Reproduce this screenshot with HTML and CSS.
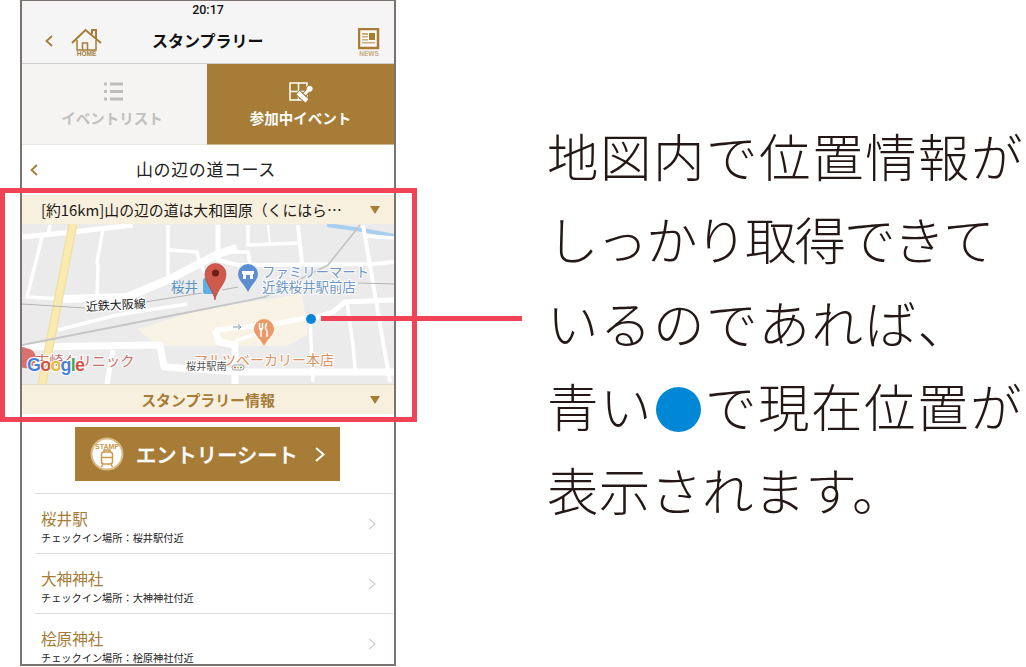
FILE: index.html
```html
<!DOCTYPE html>
<html lang="ja">
<head>
<meta charset="utf-8">
<title>スタンプラリー</title>
<link rel="stylesheet" href="styles.css">
</head>
<body>
<div class="stage">
  <div class="phone">
    <header class="top">
      <div class="status">20:17</div>
      <div class="nav">
        <svg class="chev-nav" viewBox="0 0 8 12"><path d="M7 1 L1.5 6 L7 11"/></svg>
        <svg class="home" viewBox="0 0 32 28">
          <path class="ln2" d="M1 15 L14.500 2 L30 15"/>
          <path class="ln2" d="M21 6 V2 H25 V11"/>
          <path class="ln15" d="M6 12 V22 H25 V12 M11.500 22 V15 H16.500 V22"/>
          <text class="tiny" x="15.500" y="27.500" text-anchor="middle">HOME</text>
        </svg>
        <div class="nav-title">スタンプラリー</div>
        <svg class="news" viewBox="0 0 22 28">
          <rect class="paper" x="1" y="1" width="19" height="19"/>
          <rect class="fillg" x="11" y="5" width="6" height="7"/>
          <rect class="fillp" x="4" y="5" width="6" height="2"/>
          <rect class="fillp" x="4" y="8" width="6" height="1.500"/>
          <rect class="fillp" x="4" y="11" width="6" height="1.500"/>
          <rect class="fillp" x="4" y="14" width="13" height="1.500"/>
          <text class="tiny pale" x="11" y="27.500" text-anchor="middle">NEWS</text>
        </svg>
      </div>
    </header>

    <div class="tabs">
      <div class="tab off">
        <svg class="tab-ico" viewBox="0 0 25 22">
          <path class="list" d="M3 2 H6 M9 2 H22 M3 9.500 H6 M9 9.500 H22 M3 17 H6 M9 17 H22"/>
        </svg>
        <span>イベントリスト</span>
      </div>
      <div class="tab on">
        <svg class="tab-ico" viewBox="0 0 25 22">
          <path class="wline" d="M1 1 H18 V18 H1 Z M9.500 1 V18 M1 9.500 H18"/>
          <g transform="rotate(42 16 12)">
            <rect class="stampbody" x="9.500" y="13" width="13" height="5.500"/>
            <path class="stampbody" d="M14 13 V8 C11.500 6 12.500 1.500 16 1.500 C19.500 1.500 20.500 6 18 8 V13 Z"/>
          </g>
        </svg>
        <span>参加中イベント</span>
      </div>
    </div>

    <div class="course">
      <svg class="chev-course" viewBox="0 0 8 12"><path d="M7 1 L1.500 6 L7 11"/></svg>
      <span>山の辺の道コース</span>
    </div>

    <div class="acc acc-first">
      <span class="acc-text">[約16km]山の辺の道は大和国原（くにはら…</span>
      <i class="tri"></i>
    </div>

    <div class="map">
      <svg class="map-svg" viewBox="0 0 372 160">
        <rect class="ground" width="372" height="160"/>
        <path class="beige" d="M116 105 L180 85 L280 70 L286 110 L265 122 L135 122 Z"/>
        <path class="river" d="M305 1 L340 6 L373 12"/>
        <g class="roads">
          <path class="r5" d="M0 13 L51 8 L111 1"/>
          <path class="r3" d="M28 1 L26 11"/>
          <path class="r3" d="M20 13 L5 73 L41 75"/>
          <path class="r3" d="M81 5 L75 38 L76 42 L75 73"/>
          <path class="r8" d="M41 75 L105 73 L148 55 L196 30 L215 24"/>
          <path class="r3" d="M146 1 V55"/>
          <path class="r3" d="M148 26 L175 28 L178 41 L183 48"/>
          <path class="r3" d="M36 106 L95 91 L165 80"/>
          <path class="r7" d="M0 123 L138 121 L142 143 L188 146 L220 148 L372 148"/>
          <path class="r5" d="M91 126 L85 160"/>
          <path class="r5" d="M196 1 V38"/>
          <path class="r3" d="M226 1 V21 L277 19"/>
          <path class="r2" d="M246 1 L248 21"/>
          <path class="r4" d="M276 1 L280 40"/>
          <path class="r3" d="M201 28 L226 28 L228 41"/>
          <path class="r4" d="M196 36 L216 41 L350 40 L372 38"/>
          <path class="r4" d="M341 1 L368 158"/>
          <path class="r3" d="M345 12 L373 14"/>
          <path class="r5" d="M290 95 L311 88 L323 78 L373 76"/>
          <path class="r5" d="M193 106 L251 100 L290 93"/>
          <path class="r3" d="M288 95 L291 158"/>
          <path class="r3" d="M325 78 L331 121 L333 146"/>
          <path class="r6" d="M193 106 L197 118 L213 121 V160"/>
          <path class="r3" d="M213 117 L240 108"/>
        </g>
        <path class="yellow-edge" d="M51 0 L20 160"/>
        <path class="yellow" d="M51 0 L20 160"/>
        <path class="rail-thin" d="M0 80 L63 84 M123 78 L180 69 M200 66 L216 63 M336 59 L372 60"/>
        <path class="rail" d="M0 121 L183 85 L243 73 L306 41 L338 1"/>
        <path class="arrow" d="M211 103 H219 M216 100.500 L219 103 L216 105.500"/>
        <text class="lbl-rail" x="64" y="87" transform="rotate(-3 64 87)">近鉄大阪線</text>
        <text class="lbl-blue" x="149" y="68">桜井</text>
        <rect class="st-ico" x="181" y="54" width="14" height="16" rx="2"/>
        <text class="lbl-fm" x="240" y="53">ファミリーマート</text>
        <text class="lbl-fm" x="240" y="68">近鉄桜井駅前店</text>
        <text class="lbl-shop" x="172" y="141">マルツベーカリー本店</text>
        <text class="lbl-clinic" x="13" y="142">志崎クリニック</text>
        <text class="lbl-st" x="164" y="146">桜井駅南</text>
        <rect class="bus" x="210" y="141" width="12" height="5" rx="2.500"/>
        <circle class="bus-r" cx="213" cy="143.500" r="1"/>
        <circle class="bus-y" cx="216" cy="143.500" r="1"/>
        <circle class="bus-g" cx="219" cy="143.500" r="1"/>
        <path class="pin-clinic" d="M-6 133 A10 10 0 1 1 -1 143 Z M0 123 A10 10 0 0 1 0 143 Z"/>
        <path class="pin-fm" d="M226 68 C222 60 216 56 216 50 A10 10 0 0 1 236 50 C236 56 230 60 226 68 Z"/>
        <path class="pin-fm-w" d="M220 47 H232 V50 H220 Z M221 50 V55 H231 V50 M224 51 H228 V55 H224 Z"/>
        <path class="pin-food" d="M242 122 C238 114 232 111 232 105 A10 10 0 0 1 252 105 C252 111 246 114 242 122 Z"/>
        <path class="pin-food-w" d="M237.500 99 V104 C237.500 106 240.500 106 240.500 104 V99 M239 104 V113 M245 99 C243 101 243 106 245 107 V113"/>
        <path class="pin-red" d="M193 76 C191 65 183 60 183 50 A10.500 10.500 0 0 1 204 50 C204 60 195 65 193 76 Z"/>
        <circle class="pin-dot" cx="193.500" cy="49" r="3.500"/>
        <text class="g-logo" x="5" y="147"><tspan class="g1">G</tspan><tspan class="g2">o</tspan><tspan class="g3">o</tspan><tspan class="g1">g</tspan><tspan class="g4">l</tspan><tspan class="g2">e</tspan></text>
        <circle class="me" cx="289" cy="95" r="5"/>
      </svg>
    </div>

    <div class="acc acc-second">
      <span class="acc-mid">スタンプラリー情報</span>
      <i class="tri"></i>
    </div>

    <div class="btn-wrap">
      <div class="entry">
        <svg class="entry-ico" viewBox="0 0 34 34">
          <circle class="badge" cx="17" cy="17" r="15.500"/>
          <text class="badge-t" x="17" y="12" text-anchor="middle">STAMP</text>
          <rect class="train" x="11.500" y="15" width="11" height="12" rx="2.500"/>
          <path class="train" d="M11.500 20.500 H22.500 M14 15 V13 H20 V15 M13 27 L11.500 30 M21 27 L22.500 30"/>
        </svg>
        <span class="entry-t">エントリーシート</span>
        <svg class="entry-chev" viewBox="0 0 10 15"><path d="M1 1 L8.500 7.500 L1 14"/></svg>
      </div>
    </div>

    <ul class="spots">
      <li class="spot">
        <div><div class="spot-name">桜井駅</div><div class="spot-sub">チェックイン場所：桜井駅付近</div></div>
        <svg class="spot-chev" viewBox="0 0 8 12"><path d="M1 1 L7 6 L1 11"/></svg>
      </li>
      <li class="spot">
        <div><div class="spot-name">大神神社</div><div class="spot-sub">チェックイン場所：大神神社付近</div></div>
        <svg class="spot-chev" viewBox="0 0 8 12"><path d="M1 1 L7 6 L1 11"/></svg>
      </li>
      <li class="spot">
        <div><div class="spot-name">桧原神社</div><div class="spot-sub">チェックイン場所：桧原神社付近</div></div>
        <svg class="spot-chev" viewBox="0 0 8 12"><path d="M1 1 L7 6 L1 11"/></svg>
      </li>
    </ul>
  </div>

  <div class="note">
    <div>地図内で位置情報が</div>
    <div class="note-tight">しっかり取得できて</div>
    <div>いるのであれば、</div>
    <div>青い<i class="note-dot"></i>で現在位置が</div>
    <div class="note-snug">表示されます。</div>
  </div>

  <div class="callout"></div>
  <div class="leader"></div>
</div>
</body>
</html>
```

FILE: styles.css
```css
* { box-sizing: border-box; }
html, body { margin: 0; padding: 0; background: #fff; overflow: hidden; }
body { font-family: "Noto Sans CJK JP", "Noto Sans", sans-serif; color: #231815; }

.stage { position: relative; width: 1026px; height: 667px; display: flex; align-items: flex-start; overflow: hidden; }

.phone { width: 376px; height: 666px; margin-left: 20px; flex: none; border: 2px solid #7a7370; border-top-width: 1px; overflow: hidden; background: #fff; }

.top { height: 63px; background: #f5f5f5; border-bottom: 1px solid #cfcfcf; }
.status { height: 17px; text-align: center; font: 500 12.500px/17px Roboto, "Liberation Sans", sans-serif; color: #111; }
.nav { position: relative; height: 45px; display: flex; align-items: center; padding-left: 23px; }
.chev-nav { width: 8px; height: 12px; flex: none; fill: none; stroke: #a67c37; stroke-width: 1.800; }
.home { width: 32px; height: 28px; flex: none; margin-left: 18px; margin-top: 2px; }
.ln2 { fill: none; stroke: #a67c37; stroke-width: 2; }
.ln15 { fill: none; stroke: #a67c37; stroke-width: 1.500; }
.tiny { font: 700 6.500px "Liberation Sans", sans-serif; fill: #a67c37; }
.pale { fill: #c9ad7b; }
.nav-title { flex: none; margin-left: 49px; font-size: 16px; font-weight: 700; color: #111; line-height: 20px; width: 110px; white-space: nowrap; margin-top: -1px; }
.news { width: 22px; height: 28px; flex: none; margin-left: 96px; margin-top: 2px; }
.paper { fill: #fbf9f5; stroke: #a67c37; stroke-width: 2.500; }
.fillg { fill: #a67c37; }
.fillp { fill: #c9ad7b; }

.tabs { display: flex; height: 81px; }
.tab { height: 81px; display: flex; flex-direction: column; align-items: center; font-size: 14.500px; font-weight: 700; line-height: 20px; padding-top: 18px; }
.tab span { margin-top: 4px; white-space: nowrap; }
.tab.off { width: 185px; padding-right: 5px; background: #f5f4f2; color: #c0c0c0; border-bottom: 1px solid #e9e7e2; }
.tab.on { width: 187px; background: #a67c37; color: #fff; border-bottom: 1px solid #d0b88e; }
.tab-ico { width: 25px; height: 22px; margin-left: 2px; }
.list { stroke: #bcbcbc; stroke-width: 3; fill: none; }
.wline { stroke: #fff; stroke-width: 1.500; fill: none; }
.stampbody { fill: #fff; stroke: #a67c37; stroke-width: 1; }

.course { position: relative; height: 50px; display: flex; align-items: center; justify-content: center; font-size: 17px; color: #222; padding-right: 4px; letter-spacing: .6px; }
.course span { margin-top: -3px; }
.chev-course { position: absolute; left: 8px; top: 19px; width: 8px; height: 12px; fill: none; stroke: #a67c37; stroke-width: 1.800; }

.acc { position: relative; background: #f8f0df; display: flex; align-items: center; }
.acc-first { height: 29px; padding-left: 19px; font-size: 14.850px; color: #231815; white-space: nowrap; }
.acc-second { height: 30px; justify-content: center; font-size: 14.900px; font-weight: 700; color: #a67c37; border-top: 1px solid #e2dccb; }
.tri { position: absolute; right: 14px; top: 11px; width: 0; height: 0; border-left: 5px solid transparent; border-right: 5px solid transparent; border-top: 8px solid #a67c37; }

.map { height: 160px; }
.map-svg { display: block; width: 372px; height: 160px; }
.ground { fill: #ebebeb; }
.beige { fill: #f8f3e4; }
.river { fill: none; stroke: #a9cff0; stroke-width: 4; }
.roads path { fill: none; stroke: #fff; stroke-linejoin: round; }
.roads .r2 { stroke-width: 2; }
.roads .r3 { stroke-width: 3.500; }
.roads .r4 { stroke-width: 4; }
.roads .r5 { stroke-width: 5; }
.roads .r6 { stroke-width: 7; }
.roads .r7 { stroke-width: 7; }
.roads .r8 { stroke-width: 8; }
.yellow-edge { fill: none; stroke: #efdf9f; stroke-width: 9; }
.yellow { fill: none; stroke: #f9eab0; stroke-width: 6.500; }
.rail-thin { fill: none; stroke: #b4b4b4; stroke-width: 1; }
.rail { fill: none; stroke: #c6c6c6; stroke-width: 1.800; }
.arrow { fill: none; stroke: #8d92b0; stroke-width: 1; }
.lbl-rail { font-size: 12px; fill: #222; stroke: #fff; stroke-width: 2.500px; paint-order: stroke; }
.lbl-blue { font-size: 13.500px; fill: #5a93c8; }
.st-ico { fill: #5eb1e8; }
.lbl-fm { font-size: 13.400px; fill: #6f95c4; stroke: #fff; stroke-width: 2px; paint-order: stroke; }
.lbl-shop { font-size: 14px; fill: #d9925f; stroke: #fff; stroke-width: 2px; paint-order: stroke; }
.lbl-clinic { font-size: 14.200px; fill: #c46a66; stroke: #fff; stroke-width: 2px; paint-order: stroke; }
.lbl-st { font-size: 10.200px; fill: #555; stroke: #fff; stroke-width: 2px; paint-order: stroke; }
.bus { fill: #fff; stroke: #888; stroke-width: .8; }
.bus-r { fill: #d9534f; }
.bus-y { fill: #e2b33c; }
.bus-g { fill: #5aa85a; }
.pin-clinic { fill: #d9726c; }
.pin-fm { fill: #5b8fd0; }
.pin-fm-w { fill: #fff; }
.pin-food { fill: #e89a68; }
.pin-food-w { fill: none; stroke: #fff; stroke-width: 1.500; }
.pin-red { fill: #cf5a4c; stroke: #a8402f; stroke-width: .6; }
.pin-dot { fill: #6b1f16; }
.g-logo { font: 700 18px "Liberation Sans", sans-serif; stroke: #fff; stroke-width: 2px; paint-order: stroke; letter-spacing: -.8px; }
.g1 { fill: #4a7fd9; }
.g2 { fill: #d8503f; }
.g3 { fill: #e8b730; }
.g4 { fill: #4aa45a; }
.me { fill: #0a85d9; }

.btn-wrap { display: flex; padding: 13px 0 12px 53px; }
.entry { width: 265px; height: 54px; background: #a67c37; display: flex; align-items: center; padding-left: 15px; color: #fff; }
.entry-ico { width: 34px; height: 34px; flex: none; }
.badge { fill: #fff; stroke: #d9bb84; stroke-width: 2; }
.badge-t { font: 700 7px "Liberation Sans", sans-serif; fill: #c99b4e; }
.train { fill: none; stroke: #c99b4e; stroke-width: 1.500; }
.entry-t { font-size: 20.300px; font-weight: 500; -webkit-text-stroke: .35px #fff; margin-left: 12px; white-space: nowrap; width: 162px; line-height: 24px; }
.entry-chev { width: 10px; height: 15px; margin-left: 17px; fill: none; stroke: #fff; stroke-width: 2; }

.spots { list-style: none; margin: 0 0 0 13px; padding: 0; }
.spot { height: 60px; border-top: 1px solid #dedede; padding: 12px 18px 0 6px; display: flex; justify-content: space-between; }
.spot-name { font-size: 15.600px; line-height: 24px; color: #a67c37; white-space: nowrap; }
.spot-sub { font-size: 10.200px; line-height: 13px; color: #222; white-space: nowrap; margin-top: 1px; }
.spot-chev { width: 8px; height: 12px; margin-top: 12px; flex: none; fill: none; stroke: #cfcfcf; stroke-width: 1.200; }

.note { flex: none; margin-left: 151px; padding-top: 113px; font-size: 51.500px; letter-spacing: 1.500px; line-height: 83.400px; font-weight: 300; color: #231815; white-space: nowrap; }
.note-tight { letter-spacing: -2px; }
.note-snug { letter-spacing: .2px; }
.note-dot { display: inline-block; width: 45px; height: 45px; border-radius: 50%; background: #0088d6; margin: 0 4px 0 3px; vertical-align: -5px; }

.callout { position: absolute; left: 0; top: 188px; width: 417px; height: 234px; border: 5px solid #f04456; }
.leader { position: absolute; left: 321px; top: 316px; width: 201px; height: 5px; background: #f04456; }
```
